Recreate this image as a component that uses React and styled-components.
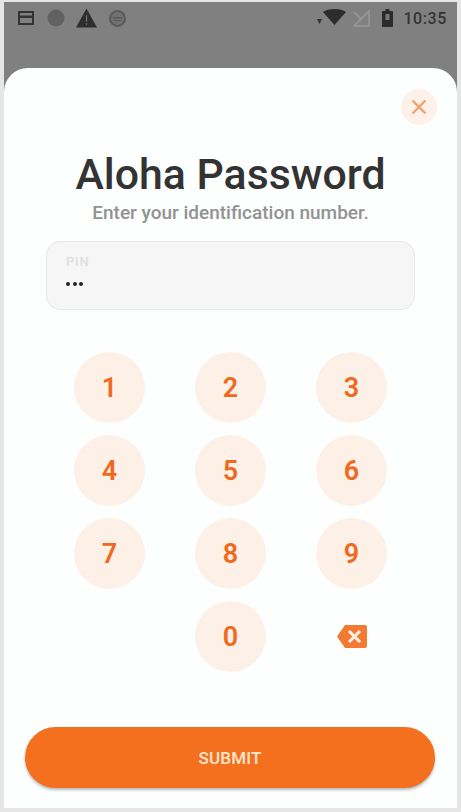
import styled, { createGlobalStyle } from 'styled-components';

const GlobalStyle = createGlobalStyle`
  html, body {
    margin: 0;
    padding: 0;
    background: #e6e6e6;
  }
  * {
    box-sizing: border-box;
  }
`;

const Screen = styled.div`
  width: 461px;
  height: 812px;
  padding: 2px 4px 4px 4px;
  overflow: hidden;
  font-family: Roboto, 'Liberation Sans', sans-serif;
`;

const Phone = styled.div`
  height: 806px;
  display: flex;
  flex-direction: column;
  background: #808080;
`;

const StatusBar = styled.div`
  height: 66px;
  padding: 5px 10px 0 13px;
  display: flex;
  align-items: flex-start;
  justify-content: space-between;
  flex-shrink: 0;
`;

const StatusGroup = styled.div`
  height: 22px;
  display: flex;
  align-items: center;
  gap: ${(p) => p.$gap}px;
`;

const Clock = styled.span`
  font-size: 16px;
  font-weight: 500;
  letter-spacing: 0.6px;
  color: #333;
  margin-left: 3px;
`;

const Sheet = styled.div`
  flex: 1;
  background: #fdfefe;
  border-radius: 24px 24px 0 0;
  display: flex;
  flex-direction: column;
  align-items: center;
  padding: 21px 21px 16px;
`;

const CloseRow = styled.div`
  width: 100%;
  display: flex;
  justify-content: flex-end;
  margin-right: -1px;
`;

const CloseButton = styled.button`
  width: 36px;
  height: 36px;
  padding: 0;
  border: 0;
  border-radius: 50%;
  background: #fdf2e9;
  display: flex;
  align-items: center;
  justify-content: center;
`;

const Title = styled.h1`
  margin: 25px 0 0;
  font-size: 42.8px;
  line-height: 48px;
  font-weight: 500;
  color: #333;
  text-align: center;
`;

const Subtitle = styled.p`
  margin: 5px 0 0;
  font-size: 19px;
  line-height: 20px;
  font-weight: 500;
  color: #929292;
  text-align: center;
`;

const PinField = styled.div`
  width: 369px;
  height: 69px;
  margin: 18px 0 0;
  padding: 13px 19px 0;
  background: #f6f6f6;
  border: 1.5px solid #e8e8e8;
  border-radius: 14px;
`;

const PinLabel = styled.div`
  font-size: 13px;
  line-height: 14px;
  letter-spacing: 0.8px;
  font-weight: 500;
  color: #dedede;
`;

const PinDots = styled.div`
  margin-top: 13px;
  display: flex;
  gap: 2.5px;
`;

const PinDot = styled.span`
  width: 4px;
  height: 4px;
  border-radius: 50%;
  background: #222;
`;

const Keypad = styled.div`
  margin: 42px 0 0;
  display: grid;
  grid-template-columns: repeat(3, 71px);
  grid-auto-rows: 71px;
  column-gap: 50px;
  row-gap: 12px;
`;

const Key = styled.button`
  width: 71px;
  height: 71px;
  padding: 0;
  border: 0;
  border-radius: 50%;
  background: #fdf0e6;
  color: #ef6a20;
  font-family: inherit;
  font-size: 27px;
  font-weight: 600;
  display: flex;
  align-items: center;
  justify-content: center;
  grid-column: ${(p) => p.$column || 'auto'};
`;

const BackspaceKey = styled.button`
  width: 71px;
  height: 71px;
  padding: 0;
  border: 0;
  background: none;
  display: flex;
  align-items: center;
  justify-content: center;
`;

const SubmitButton = styled.button`
  width: 410px;
  height: 61px;
  margin: 55px 0 0 -1px;
  border: 0;
  border-radius: 31px;
  background: #f4701f;
  color: #fde8cf;
  font-family: inherit;
  font-size: 17px;
  letter-spacing: 0.2px;
  font-weight: 500;
  box-shadow: 0 2px 3px rgba(0, 0, 0, 0.28);
`;

const digits = ['1', '2', '3', '4', '5', '6', '7', '8', '9'];

function StatusLeft() {
  return (
    <StatusGroup $gap={11.5}>
      <svg width="18" height="16" viewBox="0 0 18 16">
        <path d="M1 1h16v14H1z M3 3v2.5h12V3z M3 8v5h12V8z" fill="#333" fillRule="evenodd" />
      </svg>
      <svg width="18" height="18" viewBox="0 0 18 18">
        <circle cx="9" cy="9" r="8.5" fill="#626262" />
      </svg>
      <svg width="21" height="20" viewBox="0 0 22 20">
        <path d="M11 0 22 20H0z" fill="#2e2e2e" />
        <path d="M10.4 7h1.2v7h-1.2zM10.4 15.5h1.2v1.5h-1.2z" fill="#777" />
      </svg>
      <svg width="17" height="17" viewBox="0 0 17 17">
        <circle cx="8.5" cy="8.5" r="7.5" fill="#707070" stroke="#5a5a5a" strokeWidth="2" />
        <path d="M4 7h9v1.4H4zM4 10h9v1H4z" fill="#5a5a5a" />
      </svg>
    </StatusGroup>
  );
}

function StatusRight() {
  return (
    <StatusGroup $gap={7}>
      <svg width="29" height="18" viewBox="0 0 29 18">
        <path d="M0 10h5l-2.5 5z" fill="#333" />
        <path d="M6 3c5-4 18-4 23 0L17.5 16z" fill="#2c2c2c" />
      </svg>
      <svg width="22" height="17" viewBox="0 0 22 17">
        <path d="M16 1v15H1z" fill="none" stroke="#999" strokeWidth="1.5" />
        <path d="M1 2l7 7" stroke="#999" strokeWidth="1.5" />
      </svg>
      <svg width="11" height="18" viewBox="0 0 11 18">
        <path d="M3.5 0h4v2H10a1 1 0 0 1 1 1v14a1 1 0 0 1-1 1H1a1 1 0 0 1-1-1V3a1 1 0 0 1 1-1h2.5z" fill="#2b2b2b" />
        <path d="M3.5 5h4v6h-4z" fill="#777" />
      </svg>
      <Clock>10:35</Clock>
    </StatusGroup>
  );
}

export default function App() {
  return (
    <Screen>
      <GlobalStyle />
      <Phone>
        <StatusBar>
          <StatusLeft />
          <StatusRight />
        </StatusBar>
        <Sheet>
          <CloseRow>
            <CloseButton aria-label="Close">
              <svg width="16" height="16" viewBox="0 0 16 16">
                <path d="M1.5 1.5l13 13M14.5 1.5l-13 13" stroke="#f2a064" strokeWidth="2.2" />
              </svg>
            </CloseButton>
          </CloseRow>
          <Title>Aloha Password</Title>
          <Subtitle>Enter your identification number.</Subtitle>
          <PinField>
            <PinLabel>PIN</PinLabel>
            <PinDots>
              <PinDot />
              <PinDot />
              <PinDot />
            </PinDots>
          </PinField>
          <Keypad>
            {digits.map((digit) => (
              <Key key={digit}>{digit}</Key>
            ))}
            <Key $column="2">0</Key>
            <BackspaceKey aria-label="Delete">
              <svg width="30" height="23" viewBox="0 0 30 23">
                <path d="M8 0h20a2 2 0 0 1 2 2v19a2 2 0 0 1-2 2H8L0 11.5z" fill="#f47a33" />
                <path d="M12 6l11 11M23 6 12 17" stroke="#fff3e6" strokeWidth="3" />
              </svg>
            </BackspaceKey>
          </Keypad>
          <SubmitButton>SUBMIT</SubmitButton>
        </Sheet>
      </Phone>
    </Screen>
  );
}
